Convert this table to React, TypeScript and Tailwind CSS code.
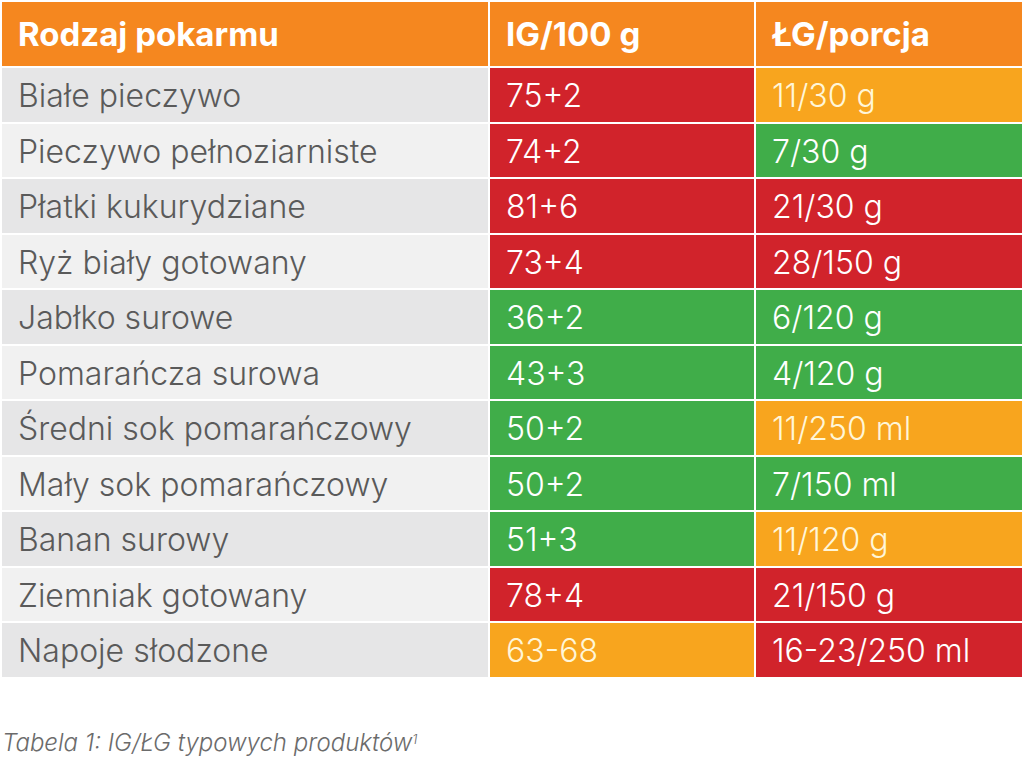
import React from "react";

type C = "r" | "g" | "y";
const rows: [string, string, C, string, C][] = [
  ["Białe pieczywo", "75+2", "r", "11/30 g", "y"],
  ["Pieczywo pełnoziarniste", "74+2", "r", "7/30 g", "g"],
  ["Płatki kukurydziane", "81+6", "r", "21/30 g", "r"],
  ["Ryż biały gotowany", "73+4", "r", "28/150 g", "r"],
  ["Jabłko surowe", "36+2", "g", "6/120 g", "g"],
  ["Pomarańcza surowa", "43+3", "g", "4/120 g", "g"],
  ["Średni sok pomarańczowy", "50+2", "g", "11/250 ml", "y"],
  ["Mały sok pomarańczowy", "50+2", "g", "7/150 ml", "g"],
  ["Banan surowy", "51+3", "g", "11/120 g", "y"],
  ["Ziemniak gotowany", "78+4", "r", "21/150 g", "r"],
  ["Napoje słodzone", "63-68", "y", "16-23/250 ml", "r"],
];

function Cell({ c, children }: { c: C; children: React.ReactNode }) {
  const cls =
    c === "r"
      ? "bg-[#d1232b] text-white"
      : c === "g"
      ? "bg-[#40ad49] text-white"
      : "bg-[#f8a51e] text-[#fff6d8]";
  return <div className={`${cls} flex items-center pl-4 pt-[3px] text-[32px] font-light`}>{children}</div>;
}

export default function App() {
  return (
    <div className="w-[1024px] h-[757px] bg-white" style={{ fontFamily: "Inter, 'Liberation Sans', sans-serif" }}>
      <div className="pl-[2px] pt-[2px] w-[1022px]">
        <div className="grid grid-cols-[486px_264px_266px] gap-[2px] bg-white">
          <div className="h-[64px] bg-[#f5871f] text-white font-bold text-[33px] flex items-center pl-4 pt-[2px]">Rodzaj pokarmu</div>
          <div className="h-[64px] bg-[#f5871f] text-white font-bold text-[33px] flex items-center pl-4 pt-[2px]">IG/100 g</div>
          <div className="h-[64px] bg-[#f5871f] text-white font-bold text-[33px] flex items-center pl-4 pt-[2px]">ŁG/porcja</div>
          {rows.map((r, i) => (
            <React.Fragment key={i}>
              <div
                className={`h-[53.5px] flex items-center pl-4 pt-[3px] text-[32px] font-light text-[#5a5a5a] ${
                  i % 2 === 0 ? "bg-[#e6e6e7]" : "bg-[#f1f1f1]"
                }`}
              >
                {r[0]}
              </div>
              <Cell c={r[2]}>{r[1]}</Cell>
              <Cell c={r[4]}>{r[3]}</Cell>
            </React.Fragment>
          ))}
        </div>
        <div className="mt-[48px] text-[24px] italic font-light text-[#6b6b6b]">
          Tabela 1: IG/ŁG typowych produktów<sup className="text-[13px]">1</sup>
        </div>
      </div>
    </div>
  );
}
